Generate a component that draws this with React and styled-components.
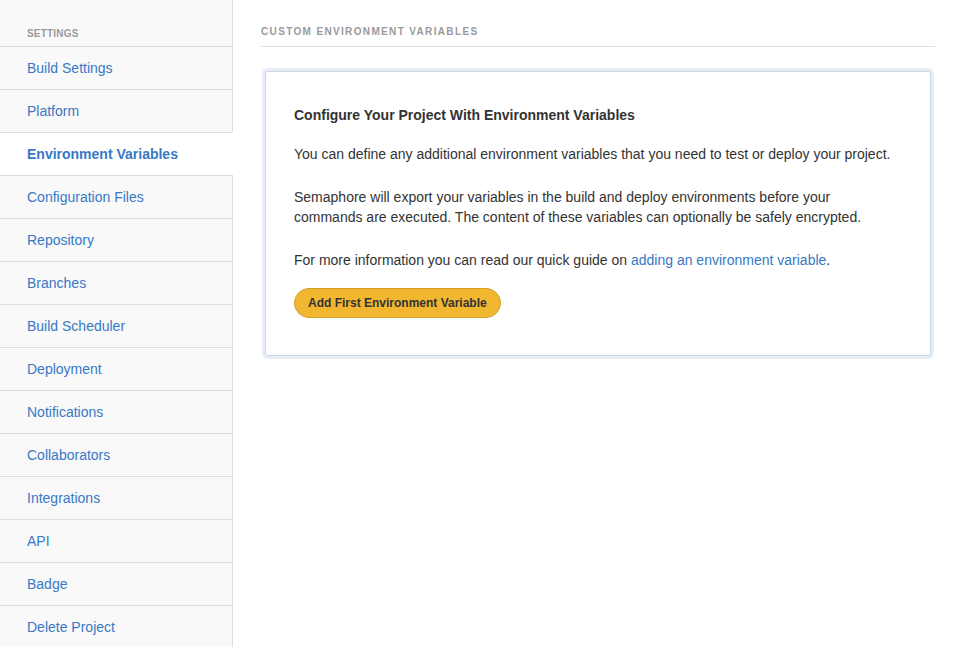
import React from "react";
import styled, { createGlobalStyle } from "styled-components";

const GlobalStyle = createGlobalStyle`
  html, body {
    margin: 0;
    padding: 0;
    background: #fff;
    font-family: "Liberation Sans", Helvetica, Arial, sans-serif;
    -webkit-font-smoothing: antialiased;
  }
  * { box-sizing: border-box; }
`;

const Page = styled.div`
  display: flex;
  min-height: 100vh;
  overflow: hidden;
`;

const Sidebar = styled.nav`
  width: 233px;
  flex: 0 0 233px;
  display: flex;
  flex-direction: column;
  background: #f9f9f9;
`;

const SideHeader = styled.div`
  height: 46px;
  padding: 28px 0 0 27px;
  border-right: 1px solid #dddddd;
  font-size: 10px;
  line-height: 12px;
  font-weight: 700;
  color: #9b9b9b;
  text-transform: uppercase;
  letter-spacing: 0.2px;
`;

const SideItem = styled.a`
  display: flex;
  align-items: center;
  height: 43px;
  flex: 0 0 43px;
  padding-left: 27px;
  border-top: 1px solid #dddddd;
  border-right: 1px solid ${(p) => (p.$active ? "#ffffff" : "#dddddd")};
  background: ${(p) => (p.$active ? "#ffffff" : "#f9f9f9")};
  color: #3878c5;
  font-size: 14px;
  font-weight: ${(p) => (p.$active ? 700 : 400)};
  text-decoration: none;
  cursor: pointer;
`;

const SideFill = styled.div`
  flex: 1;
  border-top: 1px solid #dddddd;
  border-right: 1px solid #dddddd;
`;

const Main = styled.main`
  flex: 1;
  padding: 26px 24px 0 28px;
`;

const SectionTitle = styled.h2`
  margin: 0;
  padding-bottom: 8px;
  border-bottom: 1px solid #e0e0e0;
  font-size: 10px;
  line-height: 12px;
  font-weight: 700;
  letter-spacing: 1.35px;
  color: #9a9a9a;
  text-transform: uppercase;
`;

const Card = styled.section`
  margin: 24px 4px 0 4px;
  padding: 33px 28px 37px 28px;
  background: #fff;
  border: 1px solid #c9d7e2;
  border-radius: 3px;
  box-shadow: 0 0 0 3px #e6edf4;
`;

const CardTitle = styled.h3`
  margin: 0 0 19px;
  font-size: 14px;
  line-height: 20px;
  font-weight: 700;
  color: #333333;
`;

const Text = styled.p`
  margin: 0 0 ${(p) => (p.$last ? 18 : 23)}px;
  font-size: 14px;
  line-height: 20px;
  color: #333333;
`;

const Link = styled.a`
  color: #3878c5;
  text-decoration: none;
`;

const Button = styled.button`
  height: 30px;
  padding: 0 13px;
  border: 1px solid #d39f29;
  border-radius: 15px;
  background: #f1b731;
  color: #333333;
  font-family: inherit;
  font-size: 12px;
  font-weight: 700;
  cursor: pointer;
`;

const items = [
  "Build Settings",
  "Platform",
  "Environment Variables",
  "Configuration Files",
  "Repository",
  "Branches",
  "Build Scheduler",
  "Deployment",
  "Notifications",
  "Collaborators",
  "Integrations",
  "API",
  "Badge",
  "Delete Project",
];

export default function App() {
  return (
    <>
      <GlobalStyle />
      <Page>
        <Sidebar>
          <SideHeader>Settings</SideHeader>
          {items.map((label) => (
            <SideItem key={label} $active={label === "Environment Variables"}>
              {label}
            </SideItem>
          ))}
          <SideFill />
        </Sidebar>
        <Main>
          <SectionTitle>Custom Environment Variables</SectionTitle>
          <Card>
            <CardTitle>Configure Your Project With Environment Variables</CardTitle>
            <Text>
              You can define any additional environment variables that you need to test or deploy your project.
            </Text>
            <Text>
              Semaphore will export your variables in the build and deploy environments before your
              <br />
              commands are executed. The content of these variables can optionally be safely encrypted.
            </Text>
            <Text $last>
              For more information you can read our quick guide on{" "}
              <Link>adding an environment variable</Link>.
            </Text>
            <Button>Add First Environment Variable</Button>
          </Card>
        </Main>
      </Page>
    </>
  );
}
